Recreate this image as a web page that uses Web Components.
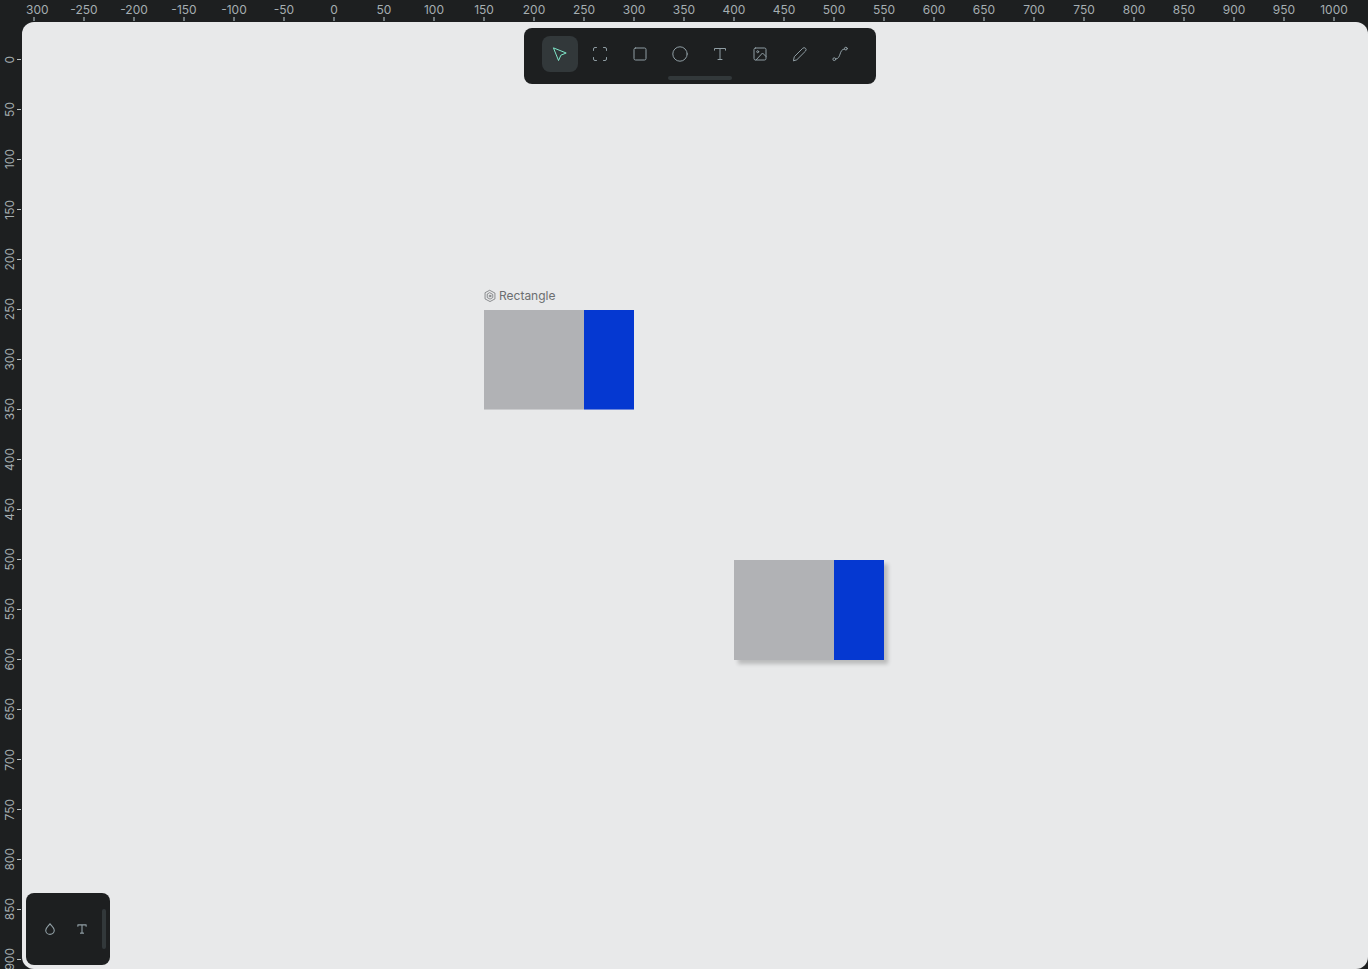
<!DOCTYPE html>
<html lang="en">
<head>
<meta charset="utf-8">
<meta name="viewport" content="width=device-width, initial-scale=1">
<title>Workspace</title>
<style>
  :root {
    --panel: #1d1f20;
    --panel-active: #32383a;
    --canvas: #e8e9ea;
    --muted: #8f9da3;
    --ruler-text: #a5aeb1;
    --accent: #7ee6c8;
  }
  body { margin: 0; font-family: Inter, "Liberation Sans", sans-serif; font-size: 12px; line-height: 16px; }
</style>
</head>
<body>
<design-workspace></design-workspace>

<script>
const ICONS = {
  move: '<path d="M1.800 2l12.400 5-5.300 2.200-2.200 5z"/>',
  board: '<path d="M1.500 4.500v-1.500q0-1.500 1.500-1.500h1.500M11.500 1.500h1.500q1.500 0 1.500 1.500v1.500M14.500 11.500v1.500q0 1.500-1.500 1.500h-1.500M4.500 14.500h-1.500q-1.500 0-1.500-1.500v-1.500"/>',
  rect: '<rect x="2" y="2" width="12" height="12" rx="1.500"/>',
  ellipse: '<circle cx="8" cy="8" r="7.200"/>',
  text: '<path d="M2.500 4.200V2.500h11v1.700M8 2.500v11M6 13.500h4"/>',
  image: '<rect x="2" y="2" width="12" height="12" rx="1.500"/><circle cx="5.700" cy="5.700" r="1"/><path d="M4 14l6.500-7 3.500 3.500"/>',
  pencil: '<path d="M1.500 14.500l.8-3.800 8.400-8.400q1.500-1.300 2.800 0t0 2.800l-8.400 8.400z"/>',
  path: '<circle cx="2.300" cy="13.200" r="1.400"/><circle cx="13.900" cy="2.600" r="1.400"/><path d="M3.700 13c5.800 0 3-10 8.800-10"/>',
  drop: '<path d="M8 .9C6.500 3.600 2.300 6.200 2.300 9.500a5.700 5.700 0 0 0 11.400 0C13.700 6.200 9.500 3.600 8 .9z"/>',
  component: '<path d="M8 .6l6.600 3.500v7.800L8 15.400l-6.600-3.500V4.100z"/><path d="M8 3.800l3.700 2.100v4.200L8 12.200l-3.700-2.100V5.900z"/><circle cx="8" cy="8" r="1.200"/>'
};

class ToolIcon extends HTMLElement {
  connectedCallback() {
    const root = this.attachShadow({ mode: "open" });
    root.innerHTML = `
      <style>
        :host { display: block; width: 16px; height: 16px; }
        svg { display: block; width: 100%; height: 100%; fill: none; stroke: currentColor;
              stroke-width: var(--stroke, 1); stroke-linecap: round; stroke-linejoin: round; overflow: visible; }
      </style>
      <svg viewBox="0 0 16 16" aria-hidden="true">${ICONS[this.getAttribute("name")]}</svg>`;
  }
}

class ToolButton extends HTMLElement {
  connectedCallback() {
    const root = this.attachShadow({ mode: "open" });
    root.innerHTML = `
      <style>
        :host { display: block; width: 36px; height: 36px; }
        button { display: grid; place-items: center; width: 100%; height: 100%; padding: 0; border: 0;
                 border-radius: 8px; background: none; color: var(--muted); cursor: pointer; }
        :host([active]) button { background: var(--panel-active); color: var(--accent); }
      </style>
      <button type="button" aria-label="${this.getAttribute("label")}" aria-pressed="${this.hasAttribute("active")}"><slot></slot></button>`;
  }
}

class CanvasToolbar extends HTMLElement {
  connectedCallback() {
    const tools = [["move", "Move"], ["board", "Board"], ["rect", "Rectangle"], ["ellipse", "Ellipse"],
                   ["text", "Text"], ["image", "Image"], ["pencil", "Curve"], ["path", "Path"]];
    const root = this.attachShadow({ mode: "open" });
    root.innerHTML = `
      <style>
        :host { display: flex; flex-direction: column; align-items: center; gap: 4px;
                padding: 8px 18px 4px; border-radius: 8px; background: var(--panel); }
        .tools { display: flex; gap: 4px; }
        .handle { width: 64px; height: 4px; padding: 0; border: 0; border-radius: 2px; background: var(--panel-active); }
      </style>
      <div class="tools" role="toolbar">
        ${tools.map(([n, l], i) => `<tool-button label="${l}" ${i ? "" : "active"}><tool-icon name="${n}"></tool-icon></tool-button>`).join("")}
      </div>
      <button class="handle" type="button" aria-label="Toggle toolbar"></button>`;
  }
}

class AssetPalette extends HTMLElement {
  connectedCallback() {
    const root = this.attachShadow({ mode: "open" });
    root.innerHTML = `
      <style>
        :host { display: flex; align-items: center; gap: 4px; height: 72px; padding: 0 4px 0 8px;
                border-radius: 8px; background: var(--panel); }
        .tools { display: flex; }
        tool-button { width: 32px; height: 32px; }
        tool-icon { width: 12px; height: 12px; --stroke: 1.5; }
        .handle { width: 4px; height: 40px; padding: 0; border: 0; border-radius: 2px; background: var(--panel-active); }
      </style>
      <div class="tools">
        <tool-button label="Colors"><tool-icon name="drop"></tool-icon></tool-button>
        <tool-button label="Typographies"><tool-icon name="text"></tool-icon></tool-button>
      </div>
      <button class="handle" type="button" aria-label="Toggle palette"></button>`;
  }
}

class RulerScale extends HTMLElement {
  connectedCallback() {
    const from = Number(this.getAttribute("from")), to = Number(this.getAttribute("to"));
    const marks = [];
    for (let v = from; v <= to; v += 50) marks.push(v === -300 ? 300 : v);
    const root = this.attachShadow({ mode: "open" });
    root.innerHTML = `
      <style>
        :host { display: flex; overflow: hidden; box-sizing: border-box; min-width: 0; min-height: 0;
                background: var(--panel); color: var(--ruler-text); }
        .mark { flex: none; display: flex; align-items: center; justify-content: space-between; }
        :host([axis="x"]) { height: 22px; padding-top: 2px; }
        :host([axis="x"]) .mark { flex-direction: column; width: 50px; height: 19px; }
        :host([axis="x"]) .mark:first-of-type { width: 37px; align-items: flex-start; }
        :host([axis="x"]) .mark:first-of-type span { padding-left: 4px; }
        :host([axis="x"]) .mark:first-of-type i { margin-left: 11px; }
        :host([axis="x"]) span { height: 15px; line-height: 16px; }
        :host([axis="x"]) i { width: 2px; height: 4px; background: #6d777b; }
        :host([axis="y"]) { flex-direction: column; width: 22px; padding: 12px 1px 0 2px; }
        :host([axis="y"]) .mark { height: 51px; margin-bottom: -1px; }
        :host([axis="y"]) span { writing-mode: vertical-rl; transform: rotate(180deg); width: 15px; line-height: 16px; }
        :host([axis="y"]) i { width: 4px; height: 1px; background: #b9c0c2; }
      </style>
      ${marks.map(v => `<div class="mark"><span>${v}</span><i></i></div>`).join("")}`;
  }
}

class CanvasShape extends HTMLElement {
  connectedCallback() {
    const root = this.attachShadow({ mode: "open" });
    root.innerHTML = `
      <style>
        :host { display: block; width: 150px; }
        .title { display: flex; align-items: center; gap: 3px; height: 16px; margin-bottom: 6px; color: #6b6e70; }
        tool-icon { width: 12px; height: 12px; }
        .fill { display: flex; height: 100px; }
        .fill div { flex: 2; background: #b1b2b5; }
        .fill div + div { flex: 1; background: #0538d1; }
        :host([shadow]) .fill { box-shadow: 4px 4px 4px rgba(0, 0, 0, .2); }
        :host([component]) .fill div { box-sizing: border-box; border-bottom: 1px solid #cacbcd; }
        :host([component]) .fill div + div { border-bottom-color: #6e88dc; }
      </style>
      ${this.hasAttribute("component") ? '<div class="title"><tool-icon name="component"></tool-icon><slot></slot></div>' : ""}
      <div class="fill"><div></div><div></div></div>`;
  }
}

class DesignWorkspace extends HTMLElement {
  connectedCallback() {
    const root = this.attachShadow({ mode: "open" });
    root.innerHTML = `
      <style>
        :host { display: grid; grid-template: 22px minmax(0, 1fr) / 22px minmax(0, 1fr); height: 100vh;
                overflow: hidden; background: var(--panel); }
        ruler-scale[axis="x"] { grid-area: 1 / 2; }
        ruler-scale[axis="y"] { grid-area: 2 / 1; }
        main { grid-area: 2 / 2; position: relative; overflow: hidden; border-radius: 12px; background: var(--canvas); }
        canvas-shape { position: absolute; }
        .main-copy { left: 462px; top: 266px; }
        .copy { left: 712px; top: 538px; }
        .top { position: absolute; inset: 6px 0 auto 10px; display: flex; justify-content: center; }
        asset-palette { position: absolute; left: 4px; bottom: 4px; }
      </style>
      <ruler-scale axis="x" from="-300" to="1000"></ruler-scale>
      <ruler-scale axis="y" from="0" to="900"></ruler-scale>
      <main>
        <canvas-shape class="main-copy" component>Rectangle</canvas-shape>
        <canvas-shape class="copy" shadow></canvas-shape>
        <div class="top"><canvas-toolbar></canvas-toolbar></div>
        <asset-palette></asset-palette>
      </main>`;
  }
}

customElements.define("tool-icon", ToolIcon);
customElements.define("tool-button", ToolButton);
customElements.define("canvas-toolbar", CanvasToolbar);
customElements.define("asset-palette", AssetPalette);
customElements.define("ruler-scale", RulerScale);
customElements.define("canvas-shape", CanvasShape);
customElements.define("design-workspace", DesignWorkspace);
</script>
</body>
</html>
